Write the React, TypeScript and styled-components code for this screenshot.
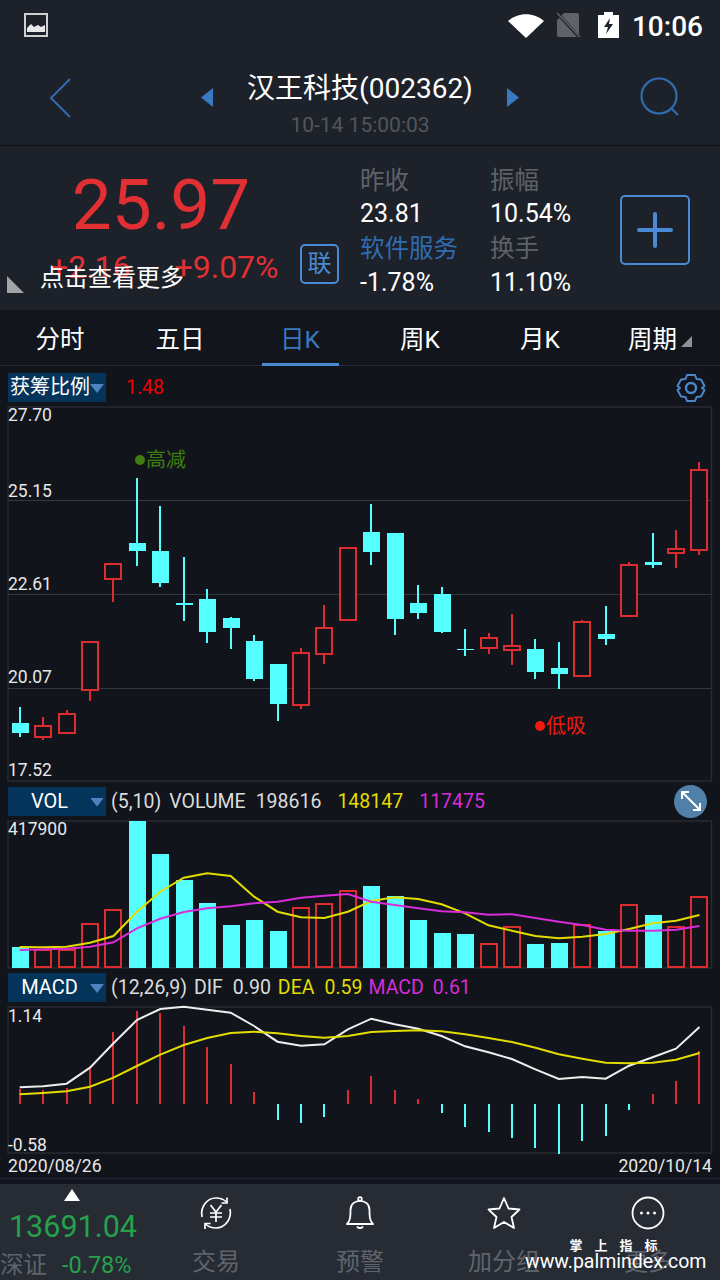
import React from 'react';
import styled, { createGlobalStyle } from 'styled-components';

const GlobalStyle = createGlobalStyle`
  html, body {
    margin: 0;
    padding: 0;
    background: #11141a;
  }
  * {
    box-sizing: border-box;
  }
`;

const FONT = `Roboto, 'Noto Sans CJK SC', sans-serif`;
const RED = '#dc2c30';
const CYAN = '#55ffff';
const YELLOW = '#e2dc00';
const MAGENTA = '#d82cd8';
const BLUE = '#4a8ad4';

const Page = styled.div`
  width: 720px;
  height: 1280px;
  overflow: hidden;
  display: flex;
  flex-direction: column;
  background: #11141a;
  font-family: ${FONT};
  color: #fff;

  & > * {
    flex: none;
  }
`;

const StatusBar = styled.div`
  height: 50px;
  background: #1d222a;
  display: flex;
  align-items: center;
  padding: 0 17px 0 24px;
`;

const StatusRight = styled.div`
  margin-left: auto;
  display: flex;
  align-items: center;
`;

const Clock = styled.span`
  font-size: 28px;
  font-weight: 500;
  margin-left: 13px;
  padding-top: 3px;
`;

const Header = styled.div`
  height: 96px;
  background: #1d222a;
  border-bottom: 1px solid #0e1116;
  display: grid;
  grid-template-columns: 1fr auto 1fr;
  align-items: center;
`;

const BackButton = styled.div`
  justify-self: start;
  margin-left: 48px;
  display: flex;
`;

const SearchButton = styled.div`
  justify-self: end;
  margin-right: 39px;
  display: flex;
`;

const TitleRow = styled.div`
  display: flex;
  align-items: center;
  gap: 34px;
`;

const TitleBlock = styled.div`
  height: 95px;
  padding-top: 21px;
  display: flex;
  flex-direction: column;
  align-items: center;
`;

const Title = styled.div`
  font-size: 28px;
  line-height: 36px;
  white-space: nowrap;
`;

const SubTitle = styled.div`
  font-size: 21px;
  line-height: 24px;
  margin-top: 6px;
  color: #52565c;
`;

const Quote = styled.div`
  position: relative;
  height: 164px;
  background: #1d212a;
  display: flex;
`;

const PriceColumn = styled.div`
  width: 300px;
  color: #e03034;
`;

const Price = styled.div`
  margin-top: 19px;
  height: 80px;
  line-height: 80px;
  font-size: 71px;
  text-align: center;
  padding-left: 22px;
`;

const ChangeRow = styled.div`
  margin-top: 4px;
  padding-left: 50px;
  display: flex;
  gap: 44px;
  font-size: 32px;
  line-height: 36px;
`;

const Hint = styled.div`
  position: absolute;
  left: 40px;
  top: 115px;
  font-size: 24px;
  line-height: 34px;
  color: #fff;
`;

const CornerMark = styled.div`
  position: absolute;
  left: 7px;
  bottom: 17px;
  width: 17px;
  height: 17px;
  background: #a2a4a6;
  clip-path: polygon(0 0, 100% 100%, 0 100%);
`;

const LinkBadge = styled.div`
  align-self: flex-end;
  margin-bottom: 26px;
  width: 39px;
  height: 40px;
  border: 2px solid ${BLUE};
  border-radius: 5px;
  color: ${BLUE};
  font-size: 24px;
  line-height: 36px;
  text-align: center;
`;

const StatsGrid = styled.div`
  margin-left: 21px;
  padding-top: 15px;
  width: 260px;
  display: grid;
  grid-template-columns: 130px 130px;
  grid-auto-rows: 34.3px;
  align-items: center;
  font-size: 24.5px;
`;

const StatLabel = styled.div<{ $accent?: boolean }>`
  color: ${(p) => (p.$accent ? '#2f6cb0' : '#5e6268')};
  white-space: nowrap;
`;

const StatValue = styled.div`
  color: #fff;
  font-size: 25px;
  padding-top: 2px;
`;

const PlusButton = styled.div`
  align-self: center;
  margin-top: 4px;
  width: 70px;
  height: 70px;
  border: 2px solid ${BLUE};
  border-radius: 5px;
  display: flex;
  align-items: center;
  justify-content: center;
`;

const Tabs = styled.div`
  height: 56px;
  background: #12151b;
  border-bottom: 1px solid #23283a;
  display: grid;
  grid-template-columns: repeat(6, 120px);
`;

const Tab = styled.div<{ $active?: boolean }>`
  position: relative;
  display: flex;
  align-items: center;
  justify-content: center;
  font-size: 24.5px;
  color: ${(p) => (p.$active ? '#3a78c0' : '#fff')};

  &::after {
    content: '';
    display: ${(p) => (p.$active ? 'block' : 'none')};
    position: absolute;
    left: 22px;
    right: 21px;
    bottom: -1px;
    height: 3px;
    background: ${BLUE};
  }
`;

const TabCaret = styled.span`
  width: 11px;
  height: 11px;
  margin: 8px 0 0 4px;
  background: #8e9094;
  clip-path: polygon(100% 0, 100% 100%, 0 100%);
`;

const IndicatorRow = styled.div<{ $height: number; $top?: number }>`
  height: ${(p) => p.$height}px;
  padding: ${(p) => p.$top ?? 0}px 14px 0 8px;
  display: flex;
  align-items: center;
  font-size: 19.5px;
  color: #dcdcdc;
  white-space: nowrap;
`;

const IndicatorSelect = styled.div<{ $tight?: boolean }>`
  position: relative;
  flex: none;
  width: 98px;
  height: 29px;
  margin-right: 5px;
  background: #04345a;
  color: #fff;
  font-size: 20px;
  line-height: 29px;
  padding-left: ${(p) => (p.$tight ? '2px' : '0')};
  padding-right: ${(p) => (p.$tight ? '0' : '15px')};
  text-align: ${(p) => (p.$tight ? 'left' : 'center')};

  &::after {
    content: '';
    position: absolute;
    right: 2px;
    top: 11px;
    width: 14px;
    height: 9px;
    background: #4f82c0;
    clip-path: polygon(0 0, 100% 0, 50% 100%);
  }
`;

const Reading = styled.span<{ $color?: string; $gap?: number }>`
  color: ${(p) => p.$color ?? '#dcdcdc'};
  margin-left: ${(p) => p.$gap ?? 0}px;
`;

const SideButton = styled.div`
  margin-left: auto;
  display: flex;
`;

const ExpandButton = styled.div`
  margin-left: auto;
  margin-right: -1px;
  width: 33px;
  height: 33px;
  border-radius: 50%;
  background: #5080a8;
  display: flex;
  align-items: center;
  justify-content: center;
`;

const Panel = styled.div<{ $height: number }>`
  position: relative;
  margin: 0 8px;
  width: 704px;
  height: ${(p) => p.$height}px;
`;

const ChartSvg = styled.svg`
  display: block;
  width: 100%;
  height: 100%;
  overflow: visible;
`;

const AxisLabel = styled.span<{ $top: number }>`
  position: absolute;
  left: 0;
  top: ${(p) => p.$top}px;
  font-size: 17.5px;
  line-height: 20px;
  color: #e8e8e8;
`;

const Signal = styled.span<{ $left: number; $top: number; $color: string }>`
  position: absolute;
  left: ${(p) => p.$left}px;
  top: ${(p) => p.$top}px;
  display: flex;
  align-items: center;
  font-size: 20px;
  line-height: 26px;
  color: ${(p) => p.$color};
  white-space: nowrap;

  &::before {
    content: '';
    width: 10px;
    height: 10px;
    margin-right: 1px;
    border-radius: 50%;
    background: ${(p) => p.$color};
  }
`;

const DateRow = styled.div`
  height: 25px;
  padding: 0 8px;
  border-bottom: 1px solid #20243a;
  display: flex;
  justify-content: space-between;
  align-items: center;
  font-size: 17.6px;
  color: #e8e8e8;
`;

const BottomGap = styled.div`
  height: 5px;
  background: #11141a;
`;

const BottomBar = styled.div`
  position: relative;
  height: 96px;
  background: #262b34;
  display: grid;
  grid-template-columns: repeat(5, 144px);
`;

const Market = styled.div`
  position: relative;
  display: flex;
  flex-direction: column;
  align-items: center;
`;

const MarketCaret = styled.div`
  margin-top: 5px;
  width: 16px;
  height: 12px;
  background: #fff;
  clip-path: polygon(50% 0, 100% 100%, 0 100%);
`;

const MarketIndex = styled.div`
  margin-top: 8px;
  margin-left: 2px;
  font-size: 30.5px;
  line-height: 36px;
  color: #27a04b;
`;

const MarketRow = styled.div`
  width: 100%;
  margin-top: 5px;
  display: flex;
  align-items: center;
  font-size: 23.5px;
  line-height: 30px;
`;

const MarketName = styled.span`
  color: #5f646c;
`;

const MarketChange = styled.span`
  margin-left: 15px;
  color: #27a04b;
`;

const NavItem = styled.div`
  padding-top: 12px;
  display: flex;
  flex-direction: column;
  align-items: center;
`;

const NavLabel = styled.div`
  margin-top: 15px;
  font-size: 24px;
  line-height: 34px;
  color: #5f646c;
`;

const Watermark = styled.div`
  position: absolute;
  right: 15px;
  top: 54px;
  width: 180px;
  text-align: center;
  color: #fff;
`;

const WatermarkTitle = styled.div`
  font-size: 13px;
  font-weight: 700;
  line-height: 16px;
  letter-spacing: 12px;
  padding-left: 9px;
  white-space: nowrap;
`;

const WatermarkUrl = styled.div`
  margin-top: -4px;
  font-size: 19.5px;
  line-height: 24px;
  white-space: nowrap;
`;

// candle: up, body top, body bottom, wick top, wick bottom (page coordinates)
const candles: [boolean, number, number, number, number][] = [
  [false, 723, 733, 707, 737],
  [true, 726, 737, 717, 740],
  [true, 714, 733, 710, 733],
  [true, 642, 690, 642, 701],
  [true, 564, 579, 564, 602],
  [false, 543, 551, 478, 566],
  [false, 551, 583, 506, 587],
  [false, 603, 605, 557, 621],
  [false, 599, 632, 589, 643],
  [false, 618, 628, 617, 649],
  [false, 641, 679, 635, 681],
  [false, 664, 704, 664, 721],
  [true, 653, 705, 648, 709],
  [true, 628, 654, 605, 664],
  [true, 548, 620, 548, 620],
  [false, 532, 552, 504, 565],
  [false, 533, 619, 533, 635],
  [false, 603, 613, 585, 619],
  [false, 594, 632, 587, 633],
  [false, 649, 650, 629, 656],
  [true, 638, 648, 633, 654],
  [true, 646, 650, 614, 665],
  [false, 649, 672, 639, 679],
  [false, 668, 674, 642, 689],
  [true, 622, 676, 620, 676],
  [false, 634, 639, 606, 645],
  [true, 565, 616, 562, 616],
  [false, 562, 565, 533, 568],
  [true, 549, 553, 530, 568],
  [true, 470, 550, 462, 555],
];

const volumeTops = [
  947, 950, 950, 924, 910, 821, 854, 880, 903, 925, 920, 931, 908, 904, 891,
  886, 896, 920, 933, 934, 944, 927, 944, 943, 925, 931, 905, 915, 927, 897,
];
const volYellow = [
  501, 502, 500, 488, 468, 395, 335, 293, 280, 288, 350, 395, 412, 414, 395,
  363, 352, 357, 373, 400, 436, 452, 468, 475, 470, 462, 447, 430, 422, 405,
].map((v) => 780 + v / 3);
const volMagenta = [
  510, 508, 506, 500, 487, 445, 416, 396, 385, 379, 370, 365, 353, 347, 342,
  365, 375, 385, 394, 397, 404, 403, 414, 425, 435, 449, 452, 452, 449, 438,
].map((v) => 780 + v / 3);

const macdBars = [
  358, 361, 355, 292, 187, 124, 129, 168, 232, 282, 367, 449, 458, 441, 360,
  319, 361, 388, 428, 470, 487, 503, 533, 551, 512, 497, 420, 373, 333, 244,
].map((v) => Math.round(970 + v / 3));
const macdWhite = [
  352, 349, 341, 293, 220, 150, 117, 110, 119, 128, 168, 215, 227, 223, 178,
  146, 163, 176, 198, 229, 247, 267, 298, 327, 321, 326, 287, 262, 236, 171,
].map((v) => 970 + v / 3);
const macdYellow = [
  373, 369, 364, 350, 323, 288, 254, 225, 204, 189, 185, 190, 198, 203, 198,
  186, 183, 181, 184, 193, 204, 216, 233, 253, 266, 278, 280, 278, 269, 249,
].map((v) => 970 + v / 3);

const MACD_ZERO = 1104;

const slotX = (i: number) => 19.7 + i * 23.44;
const barX = (i: number) => Math.round(slotX(i));
const linePoints = (values: number[]) =>
  values.map((y, i) => `${slotX(i).toFixed(1)},${y.toFixed(1)}`).join(' ');

const Frame: React.FC<{ y: number; h: number }> = ({ y, h }) => (
  <rect x={8} y={y} width={703.5} height={h} fill="none" stroke="#272b32" strokeWidth={1.5} />
);

const CandleChart = () => (
  <ChartSvg viewBox="8 406 704 376">
    <Frame y={407} h={374} />
    {[500, 594, 688].map((y) => (
      <line key={y} x1={8} x2={711} y1={y + 0.5} y2={y + 0.5} stroke="#33383c" strokeWidth={1} />
    ))}
    {candles.map(([up, top, bottom, wickTop, wickBottom], i) => {
      const x = barX(i);
      const color = up ? RED : CYAN;
      return (
        <g key={i}>
          <line x1={x} x2={x} y1={wickTop} y2={wickBottom} stroke={color} strokeWidth={2} />
          {up ? (
            <rect x={x - 8} y={top} width={16} height={bottom - top} fill="#11141a" stroke={color} strokeWidth={2} />
          ) : (
            <rect x={x - 8} y={top} width={17} height={bottom - top} fill={color} />
          )}
        </g>
      );
    })}
  </ChartSvg>
);

const VolumeChart = () => (
  <ChartSvg viewBox="8 820 704 149">
    <Frame y={821} h={147} />
    {candles.map(([up], i) => {
      const x = barX(i);
      const top = volumeTops[i];
      return up ? (
        <rect key={i} x={x - 8} y={top} width={16} height={967 - top} fill="none" stroke={RED} strokeWidth={2} />
      ) : (
        <rect key={i} x={x - 8} y={top} width={17} height={968 - top} fill={CYAN} />
      );
    })}
    <polyline points={linePoints(volYellow)} fill="none" stroke={YELLOW} strokeWidth={2} />
    <polyline points={linePoints(volMagenta)} fill="none" stroke={MAGENTA} strokeWidth={2} />
  </ChartSvg>
);

const MacdChart = () => (
  <ChartSvg viewBox="8 1006 704 148">
    <Frame y={1007} h={146} />
    {macdBars.map((y, i) => {
      const x = barX(i);
      const up = y < MACD_ZERO;
      return (
        <line
          key={i}
          x1={x}
          x2={x}
          y1={up ? y : MACD_ZERO}
          y2={up ? MACD_ZERO : y}
          stroke={up ? RED : CYAN}
          strokeWidth={2}
        />
      );
    })}
    <polyline points={linePoints(macdWhite)} fill="none" stroke="#eeeeee" strokeWidth={2} />
    <polyline points={linePoints(macdYellow)} fill="none" stroke={YELLOW} strokeWidth={2} />
  </ChartSvg>
);

const PictureIcon = () => (
  <svg width="24" height="24" viewBox="0 0 24 24">
    <rect x="1" y="1" width="22" height="22" fill="none" stroke="#d0d0d0" strokeWidth="2" />
    <path d="M3 19V15L7 11L10 14L14 12L17 14L21 12V19Z" fill="#e8e8e8" />
  </svg>
);

const WifiIcon = () => (
  <svg width="36" height="26" viewBox="0 -2 36 26">
    <path d="M0 7C10 -2 26 -2 36 7L18 24Z" fill="#fff" />
  </svg>
);

const SimIcon = () => (
  <svg width="26" height="26" viewBox="0 0 26 26" style={{ marginLeft: 11 }}>
    <path d="M9 1H22C23 1 24 2 24 3V23C24 24 23 25 22 25H4C3 25 2 24 2 23V8Z" fill="#5f6266" />
    <path d="M1 0L25 26" stroke="#1d222a" strokeWidth="3" />
    <path d="M2 1L25 25" stroke="#5f6266" strokeWidth="1.5" />
  </svg>
);

const BatteryIcon = () => (
  <svg width="21" height="26" viewBox="0 0 21 26" style={{ marginLeft: 17 }}>
    <path d="M6 0H15V3H21V26H0V3H6Z" fill="#fff" />
    <path d="M12 6L6 15H10L8 22L15 12H11Z" fill="#1d222a" />
  </svg>
);

const BackIcon = () => (
  <svg width="24" height="40" viewBox="0 0 24 40">
    <path d="M22 1L3 20L22 39" fill="none" stroke="#2f6cb0" strokeWidth="2" />
  </svg>
);

const SearchIcon = () => (
  <svg width="42" height="42" viewBox="0 0 42 42">
    <circle cx="20" cy="19" r="17.5" fill="none" stroke="#2f6cb0" strokeWidth="2.2" />
    <path d="M32 31L39 38" stroke="#2f6cb0" strokeWidth="2.2" />
  </svg>
);

const SideTriangle: React.FC<{ right?: boolean }> = ({ right }) => (
  <svg width="12" height="19" viewBox="0 0 12 19">
    <path d={right ? 'M0 0L12 9.5L0 19Z' : 'M12 0L0 9.5L12 19Z'} fill="#3a78c0" />
  </svg>
);

const PlusIcon = () => (
  <svg width="36" height="36" viewBox="0 0 36 36">
    <path d="M18 2V34M2 18H34" stroke={BLUE} strokeWidth="4" strokeLinecap="round" />
  </svg>
);

const GearIcon = () => (
  <svg width="30" height="30" viewBox="0 0 30 30">
    <path
      d="M11 2H19L20.5 6L25 6.5L28.5 13L26 15L28.5 17L25 23.5L20.5 24L19 28H11L9.5 24L5 23.5L1.5 17L4 15L1.5 13L5 6.5L9.5 6Z"
      fill="none"
      stroke="#4a86c8"
      strokeWidth="2"
      strokeLinejoin="round"
    />
    <circle cx="15" cy="15" r="5" fill="none" stroke="#4a86c8" strokeWidth="2.4" />
  </svg>
);

const ExpandIcon = () => (
  <svg width="22" height="22" viewBox="0 0 22 22">
    <path d="M2 2L20 20M2 9V2H9M13 20H20V13" fill="none" stroke="#fff" strokeWidth="2" />
  </svg>
);

const YenIcon = () => (
  <svg width="34" height="34" viewBox="0 0 34 34" fill="none" stroke="#fff" strokeWidth="1.7">
    <path d="M3 21C1 11 8 2 17 2C21 2 25 3.500 27.500 6M31 13C33 23 26 32 17 32C13 32 9 30.500 6.500 28" />
    <path d="M28 1.500V7H22.500M6 33V27.500H11.500" />
    <path d="M11.500 9L17 16L22.500 9M17 16V26M11 17H23M11 21H23" />
  </svg>
);

const BellIcon = () => (
  <svg width="34" height="34" viewBox="0 0 34 34" fill="none" stroke="#fff" strokeWidth="1.8">
    <circle cx="17" cy="3" r="1.800" />
    <path d="M4 28C7 25 7.500 22 7.500 14C7.500 8 12 4.800 17 4.800C22 4.800 26.500 8 26.500 14C26.500 22 27 25 30 28Z" strokeLinejoin="round" />
    <path d="M14 30.500C15 32.500 19 32.500 20 30.500" />
  </svg>
);

const StarIcon = () => (
  <svg width="34" height="34" viewBox="0 0 34 34">
    <path
      d="M17 2L21.500 12.500L32.500 13.500L24.500 21L27 32L17 26L7 32L9.500 21L1.500 13.500L12.500 12.500Z"
      fill="none"
      stroke="#fff"
      strokeWidth="1.800"
      strokeLinejoin="round"
    />
  </svg>
);

const MoreIcon = () => (
  <svg width="34" height="34" viewBox="0 0 34 34">
    <circle cx="17" cy="17" r="15.500" fill="none" stroke="#fff" strokeWidth="1.800" />
    <circle cx="10.500" cy="17" r="1.500" fill="#fff" />
    <circle cx="17" cy="17" r="1.500" fill="#fff" />
    <circle cx="23.500" cy="17" r="1.500" fill="#fff" />
  </svg>
);

const tabs = ['分时', '五日', '日K', '周K', '月K', '周期'];

const navItems = [
  { label: '交易', icon: <YenIcon /> },
  { label: '预警', icon: <BellIcon /> },
  { label: '加分组', icon: <StarIcon /> },
  { label: '更多', icon: <MoreIcon /> },
];

const App: React.FC = () => {
  return (
    <Page>
      <GlobalStyle />
      <StatusBar>
        <PictureIcon />
        <StatusRight>
          <WifiIcon />
          <SimIcon />
          <BatteryIcon />
          <Clock>10:06</Clock>
        </StatusRight>
      </StatusBar>

      <Header>
        <BackButton>
          <BackIcon />
        </BackButton>
        <TitleRow>
          <SideTriangle />
          <TitleBlock>
            <Title>汉王科技(002362)</Title>
            <SubTitle>10-14 15:00:03</SubTitle>
          </TitleBlock>
          <SideTriangle right />
        </TitleRow>
        <SearchButton>
          <SearchIcon />
        </SearchButton>
      </Header>

      <Quote>
        <PriceColumn>
          <Price>25.97</Price>
          <ChangeRow>
            <span>+2.16</span>
            <span>+9.07%</span>
          </ChangeRow>
        </PriceColumn>
        <LinkBadge>联</LinkBadge>
        <StatsGrid>
          <StatLabel>昨收</StatLabel>
          <StatLabel>振幅</StatLabel>
          <StatValue>23.81</StatValue>
          <StatValue>10.54%</StatValue>
          <StatLabel $accent>软件服务</StatLabel>
          <StatLabel>换手</StatLabel>
          <StatValue>-1.78%</StatValue>
          <StatValue>11.10%</StatValue>
        </StatsGrid>
        <PlusButton>
          <PlusIcon />
        </PlusButton>
        <Hint>点击查看更多</Hint>
        <CornerMark />
      </Quote>

      <Tabs>
        {tabs.map((t) => (
          <Tab key={t} $active={t === '日K'}>
            {t}
            {t === '周期' && <TabCaret />}
          </Tab>
        ))}
      </Tabs>

      <IndicatorRow $height={40} $top={3}>
        <IndicatorSelect $tight>获筹比例</IndicatorSelect>
        <Reading $color="#f00000" $gap={15}>1.48</Reading>
        <SideButton>
          <GearIcon />
        </SideButton>
      </IndicatorRow>
      <Panel $height={376}>
        <CandleChart />
        <AxisLabel $top={-1}>27.70</AxisLabel>
        <AxisLabel $top={75}>25.15</AxisLabel>
        <AxisLabel $top={168}>22.61</AxisLabel>
        <AxisLabel $top={261}>20.07</AxisLabel>
        <AxisLabel $top={354}>17.52</AxisLabel>
        <Signal $left={127} $top={41} $color="#3f7f10">高减</Signal>
        <Signal $left={527} $top={307} $color="#ee1c10">低吸</Signal>
      </Panel>

      <IndicatorRow $height={38}>
        <IndicatorSelect>VOL</IndicatorSelect>
        <Reading>(5,10)</Reading>
        <Reading $gap={8}>VOLUME</Reading>
        <Reading $gap={10}>198616</Reading>
        <Reading $color={YELLOW} $gap={16}>148147</Reading>
        <Reading $color={MAGENTA} $gap={16}>117475</Reading>
        <ExpandButton>
          <ExpandIcon />
        </ExpandButton>
      </IndicatorRow>
      <Panel $height={149}>
        <VolumeChart />
        <AxisLabel $top={-1}>417900</AxisLabel>
      </Panel>

      <IndicatorRow $height={37}>
        <IndicatorSelect>MACD</IndicatorSelect>
        <Reading>(12,26,9)</Reading>
        <Reading $gap={7}>DIF</Reading>
        <Reading $gap={10}>0.90</Reading>
        <Reading $color={YELLOW} $gap={7}>DEA</Reading>
        <Reading $color={YELLOW} $gap={10}>0.59</Reading>
        <Reading $color={MAGENTA} $gap={6}>MACD</Reading>
        <Reading $color={MAGENTA} $gap={9}>0.61</Reading>
      </IndicatorRow>
      <Panel $height={148}>
        <MacdChart />
        <AxisLabel $top={0}>1.14</AxisLabel>
        <AxisLabel $top={129}>-0.58</AxisLabel>
      </Panel>
      <DateRow>
        <span>2020/08/26</span>
        <span>2020/10/14</span>
      </DateRow>
      <BottomGap />

      <BottomBar>
        <Market>
          <MarketCaret />
          <MarketIndex>13691.04</MarketIndex>
          <MarketRow>
            <MarketName>深证</MarketName>
            <MarketChange>-0.78%</MarketChange>
          </MarketRow>
        </Market>
        {navItems.map((item) => (
          <NavItem key={item.label}>
            {item.icon}
            <NavLabel>{item.label}</NavLabel>
          </NavItem>
        ))}
        <Watermark>
          <WatermarkTitle>掌上指标</WatermarkTitle>
          <WatermarkUrl>www.palmindex.com</WatermarkUrl>
        </Watermark>
      </BottomBar>
    </Page>
  );
};

export default App;
